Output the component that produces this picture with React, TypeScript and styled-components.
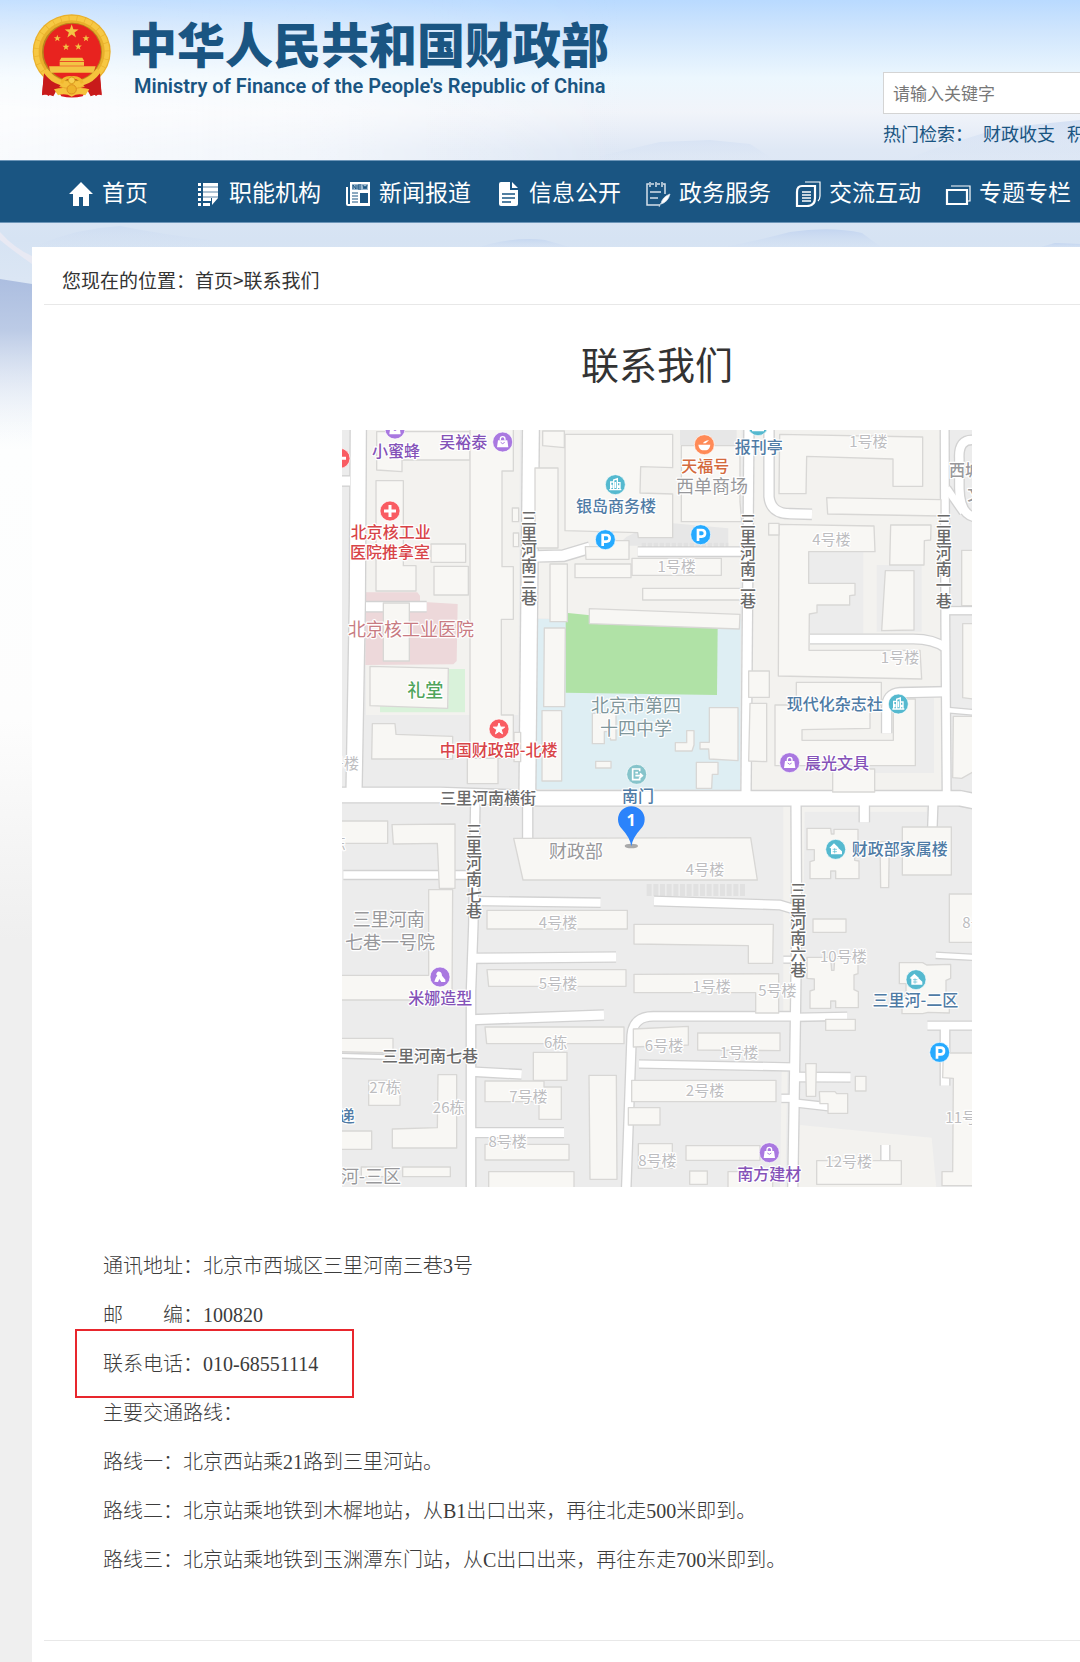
import React from "react";
import styled, { createGlobalStyle } from "styled-components";

const sans = `"Noto Sans CJK SC", "Noto Sans", sans-serif`;
const brandBlue = "#1a5582";

const GlobalStyle = createGlobalStyle`
  *, *::before, *::after { box-sizing: border-box; }
  body { margin: 0; background: #efefef; font-family: ${sans}; color: #333; }
  a { color: inherit; text-decoration: none; }
`;

const Page = styled.div`
  position: relative;
  display: flex;
  flex-direction: column;
  min-height: 100vh;
  overflow: hidden;
  background: linear-gradient(
    #b9daff 0, #cfe5fd 30px, #ecf7fe 78px, #f1f4fa 112px, #dfe8f5 150px,
    #d6e3f3 240px, #dbe6f4 280px, #fdfefe 450px, #fdfdfd 720px, #efefef 940px
  );
`;

const Backdrop = styled.svg`
  position: absolute;
  top: 0;
  left: 0;
  width: 1080px;
  height: 460px;
`;

const Header = styled.header`
  position: relative;
  display: flex;
  justify-content: space-between;
  min-width: 1250px;
  height: 160px;
  margin: 0 32px;
`;

const Brand = styled.a`
  display: flex;
  align-items: flex-start;
  gap: 17px;
  padding-top: 14px;
`;

const Emblem = styled.svg`
  width: 80px;
  height: 84px;
`;

const BrandText = styled.span`
  display: flex;
  flex-direction: column;
  color: ${brandBlue};
`;

const BrandName = styled.span`
  font-size: 48px;
  line-height: 56px;
  font-weight: 900;
`;

const BrandSub = styled.span`
  padding: 4px 0 0 5px;
  font: 600 20px/24px Roboto, "Liberation Sans", Arial, sans-serif;
`;

const Search = styled.form`
  width: 399px;
  padding-top: 72px;
`;

const SearchBox = styled.input`
  display: block;
  width: 100%;
  height: 42px;
  padding: 0 9px 2px;
  border: 1px solid #d4d4d4;
  background: #fff;
  font: 17px/24px ${sans};
  color: #333;
  &::placeholder { color: #777; opacity: 1; }
`;

const HotWords = styled.div`
  display: flex;
  gap: 12px;
  font-size: 18px;
  line-height: 38px;
  color: ${brandBlue};
  white-space: nowrap;
`;

const HotLabel = styled.span`
  width: 88px;
`;

const Nav = styled.nav`
  position: relative;
  min-width: 1314px;
  height: 63px;
  padding: 0 68px;
  border: solid #6c95b8;
  border-width: 1px 0;
  background: ${brandBlue};
`;

const NavList = styled.ul`
  display: grid;
  grid-template-columns: 127px repeat(6, 150px);
  margin: 0;
  padding: 0;
  list-style: none;
`;

const NavLink = styled.a`
  display: flex;
  align-items: center;
  gap: 8px;
  height: 61px;
  font-size: 23px;
  line-height: 60px;
  color: #fff;
  white-space: nowrap;
  svg { width: 26px; height: 26px; margin-top: 4px; }
  span { margin-top: -2px; }
`;

const Panel = styled.main`
  position: relative;
  flex: 1;
  min-width: 1250px;
  margin: 24px 32px 0;
  padding: 0 12px 20px;
  background: #fff;
`;

const Crumbs = styled.nav`
  padding: 9px 18px 0;
  border-bottom: 1px solid #e8e8e8;
  font-size: 19px;
  line-height: 48px;
`;

const Title = styled.h1`
  margin: 30px 0 39px;
  font-size: 38px;
  line-height: 56px;
  font-weight: 400;
  text-align: center;
`;

const MapFigure = styled.figure`
  width: 630px;
  margin: 0 auto 55px;
  svg { display: block; width: 100%; height: auto; }
`;

const Details = styled.div`
  padding: 0 59px 55px;
  border-bottom: 1px solid #e8e8e8;
  font-family: "Liberation Serif", "Noto Sans CJK SC", serif;
  font-size: 20px;
  line-height: 49px;
  font-weight: 300;
  color: #3c3c3c;
`;

const Line = styled.p`
  position: relative;
  margin: 0;
  white-space: pre;
`;

const Highlight = styled.span`
  position: absolute;
  top: -11px;
  left: -28px;
  width: 279px;
  height: 69px;
  border: 2px solid #e8262d;
`;

/* ---------- navigation icons ---------- */

const icons: Record<string, React.ReactNode> = {
  home: <path fill="#fff" d="M13 1 25 13H21V25H15V16H11V25H5V13H1Z" />,
  org: (
    <g fill="#fff">
      {[2, 7, 12, 17].map((y) => (
        <g key={y}>
          <rect x="3" y={y} width="3" height="3" />
          <rect x="8" y={y} width={y === 17 ? 8 : 15} height="3" />
        </g>
      ))}
      <path opacity=".65" d="M8 5H23V7H8ZM8 10H23V12H8ZM8 15H23V17H8Z" />
      <path d="M3 22H6V25H3ZM8 22H15V25H8ZM17 17H23L17 24Z" />
    </g>
  ),
  news: (
    <g>
      <path fill="#fff" d="M5 1H25V25H3Q1 25 1 23V6H3V23H5Z" />
      <rect x="7" y="3" width="16" height="6" fill="#9db9cf" />
      <path stroke={brandBlue} strokeWidth="1" fill="none" d="M8 8V4L11 8V4M16 4H13V8H16M13 6H16M18 4 19 8 20 5 21 8 22 4M7 12H13M7 15H13M7 18H13M7 21H13" />
      <rect x="15" y="12" width="8" height="10" fill={brandBlue} />
    </g>
  ),
  info: (
    <g>
      <path fill="#fff" d="M6 1H15V9H23V23Q23 25 21 25H6Q4 25 4 23V3Q4 1 6 1ZM17 1 23 7H17Z" />
      <path stroke={brandBlue} strokeWidth="1.4" d="M7 13H20M7 17H20M7 21H16" />
    </g>
  ),
  service: (
    <g fill="none" stroke="#d5e0ea" strokeWidth="1.5">
      <path d="M4 3H2V24H15M18 3H20V13M6 3H9M12 3H15M5 1V6M11 1V6M17 1V6M5 11H16M5 17H13" />
      <path fill="#fff" strokeWidth=".8" d="M25 13Q17 16 16 23Q23 21 25 13ZM16 22 14 26" />
    </g>
  ),
  exchange: (
    <g fill="none" stroke="#fff">
      <path strokeWidth="2.2" d="M7 5H20V17Q20 25 12 25H2V11Q2 5 7 5Z" />
      <path strokeWidth="1.2" d="M10 1H25V15Q25 18 23 20" />
      <path strokeWidth="1.6" d="M7 11H16M7 14H16M7 17H16M7 20H16" />
    </g>
  ),
  topic: (
    <g fill="none" stroke="#fff">
      <path strokeWidth="2.2" d="M2 9H22V23H2Z" />
      <path strokeWidth="1.2" d="M6 5H25V20H23" />
    </g>
  ),
};

const navItems = [
  ["home", "首页"],
  ["org", "职能机构"],
  ["news", "新闻报道"],
  ["info", "信息公开"],
  ["service", "政务服务"],
  ["exchange", "交流互动"],
  ["topic", "专题专栏"],
];

/* ---------- emblem ---------- */

const star = (cx: number, cy: number, r: number) =>
  Array.from({ length: 10 }, (_, i) => {
    const a = (Math.PI * i) / 5 - Math.PI / 2;
    const d = i % 2 ? r * 0.4 : r;
    return `${(cx + d * Math.cos(a)).toFixed(1)},${(cy + d * Math.sin(a)).toFixed(1)}`;
  }).join(" ");

const NationalEmblem = () => (
  <Emblem viewBox="36 26 240 252" aria-hidden="true">
    <path fill="#d8161c" d="M72 203 66 268Q78 264 86 272L110 250 124 273Q155 280 188 273L203 250 228 272Q236 264 245 268L238 203Z" />
    <ellipse cx="155" cy="139" rx="117" ry="112" fill="#e9b02c" />
    <ellipse cx="155" cy="139" rx="106" ry="101" fill="none" stroke="#f7c843" strokeWidth="14" strokeDasharray="22 2" />
    <ellipse cx="156" cy="140" rx="90" ry="88" fill="#b9821c" />
    <ellipse cx="157" cy="140" rx="86" ry="85" fill="#e8231f" />
    <g fill="#f3c444">
      <polygon points={star(155, 79, 22)} />
      <polygon points={star(112, 99, 11)} />
      <polygon points={star(198, 99, 11)} />
      <polygon points={star(138, 125, 11)} />
      <polygon points={star(175, 124, 11)} />
      <path d="M124 157H187L193 168H118ZM119 170H192V181H119ZM87 183H227L220 202H92Z" />
    </g>
    <path fill="none" stroke="#f5c23c" strokeWidth="16" d="M75 195Q108 238 155 238Q204 238 237 195" />
    <path fill="#c81b1b" d="M72 204Q92 232 122 240L112 250 100 273Q82 264 66 270ZM240 204Q220 232 190 240L200 250 212 273Q230 264 245 270Z" />
    <path fill="none" stroke="#f0b72e" strokeWidth="9" d="M125 234Q130 214 155 217Q180 214 187 234" />
    <path fill="#f5c23c" d="M102 252Q130 244 155 252Q182 244 208 252L196 270Q174 262 155 274Q136 262 114 270Z" />
    <circle cx="155" cy="252" r="14" fill="#eeb32b" stroke="#dd8f20" strokeWidth="3" />
    <circle cx="155" cy="225" r="10" fill="#f8d152" stroke="#dd9f20" strokeWidth="3" />
  </Emblem>
);

/* ---------- map ---------- */

const font = { fontFamily: sans };

const land: [string, string][] = [
  ["#f3f2ef", "78,0 540,0 535,870 378,870 78,870"],
  ["#f3f2ef", "598,0 1205,0 1200,590 590,580"],
  ["#f3f2ef", "1240,0 1800,0 1805,1095 1230,1095"],
  ["#f3f2ef", "1380,2100 1775,2138 1790,2300 1366,2300"],
  ["#f3f2ef", "1330,1140 1352,1140 1360,1760 1330,1760"],
  ["#f3f2ef", "1384,1146 1760,1146 1760,1160 1394,1160 1390,1500 1384,1500"],
  ["#f3f2ef", "1325,1940 1342,1940 1336,2300 1320,2300"],
  ["#ececec", "1405,380 1570,380 1570,625 1405,625"],
  ["#ececec", "1610,420 1745,420 1745,620 1610,620"],
  ["#ececec", "1690,820 1782,820 1782,1044 1560,1044 1560,1020 1690,1020"],
  ["#e7e7e7", "1020,14 1190,14 1190,60 1020,60"],
  ["#e7e7e7", "950,290 1165,310 1165,362 830,362 860,335"],
  ["#deeef3", "590,582 1202,582 1200,1095 588,1092"],
  ["#b0e2a6", "677,563 1133,610 1131,810 677,803"],
  ["#edd8da", "78,502 232,502 240,512 240,530 353,537 350,708 340,718 76,720"],
  ["#d9f2da", "325,732 375,732 375,862 120,862 120,840 325,840"],
];

const roads: [number, string][] = [
  [44, "M55 0 52 530 42 1100"],
  [26, "M0 168H30"],
  [46, "M573 0 562 1110"],
  [42, "M-10 1110H300L600 1120H1860L1910 1130"],
  [26, "M563 1130V1245"],
  [26, "M1227 0 1218 1110"],
  [22, "M1814 0 1816 600 1820 1110"],
  [24, "M406 1130 400 1500 393 1700V2310"],
  [23, "M400 1428 782 1433"],
  [26, "M396 1600 828 1596"],
  [26, "M396 1784 792 1770"],
  [24, "M396 1940 545 1948"],
  [25, "M396 2123H672"],
  [22, "M10 1350H390"],
  [10, "M0 1892 140 1896"],
  [26, "M1368 1130 1370 1500 1366 1800 1358 2310"],
  [24, "M858 2310 875 1830Q880 1774 940 1774H1365"],
  [20, "M897 1917 1365 1926"],
  [24, "M942 1428 1320 1440 1360 1452"],
  [20, "M1368 1777 1522 1774"],
  [24, "M1366 1956 1532 1957"],
  [20, "M1366 2034 1465 2045"],
  [26, "M1573 1130V1192"],
  [24, "M1780 1130 1777 1210"],
  [22, "M1762 1802H1900"],
  [24, "M1815 1802V1982"],
  [14, "M1787 1591 1900 1597"],
  [26, "M1287 0V215Q1292 266 1350 266L1416 268"],
  [30, "M590 394 670 392 750 368"],
  [24, "M893 380H1205"],
  [24, "M1410 642H1720Q1780 642 1816 668"],
  [26, "M1820 800 1680 803Q1640 806 1640 850V925"],
  [20, "M1820 557H1900"],
  [24, "M1900 45Q1855 42 1858 100V190Q1860 265 1900 275"],
  [20, "M1820 190 1870 262"],
  [12, "M1820 855 1900 862"],
  [26, "M78 545H260"],
  [16, "M1330 1604H1360"],
  [20, "M1324 2020H1360"],
  [22, "M1636 2160V2210"],
];

const buildings = [
  "110,20 390,20 390,105 186,105 186,140 110,135",
  "108,167 190,167 190,422 228,422 228,498 108,498",
  "273,357 377,357 377,412 273,412",
  "282,424 385,424 385,510 282,510",
  "390,0 520,0 520,138 486,138 486,425 520,425 520,583 484,583 484,870 520,870 520,1000 390,1000",
  "130,534 208,534 208,708 130,708",
  "90,724 325,730 323,850 90,842",
  "97,896 165,896 168,928 338,934 338,1002 95,1002",
  "382,1000 474,1000 474,1076 382,1076",
  "517,249 536,249 536,290 517,290",
  "520,324 536,324 536,365 520,365",
  "522,922 542,922 542,1010 522,1010",
  "608,18 673,18 673,68 608,62",
  "585,129 654,129 654,369 585,369",
  "675,28 998,28 998,128 902,125 900,204 998,207 998,338 895,338 893,323 675,317",
  "736,365 800,365 800,347 867,347 867,403 738,403",
  "705,417 873,417 873,458 705,458",
  "876,400 1144,400 1144,451 876,451",
  "908,490 1205,490 1205,525 908,525",
  "630,417 682,417 682,590 630,590",
  "748,551 1200,568 1198,612 748,596",
  "613,609 676,609 674,845 611,845",
  "606,857 665,857 665,1068 606,1068",
  "757,865 828,865 828,945 812,945 808,920 793,920 793,956 757,956",
  "767,1009 813,1009 813,1029 767,1029",
  "1108,848 1194,848 1194,1007 1108,1002 1106,972 1080,972 1080,952 1108,952",
  "1040,917 1062,917 1062,960 1056,978 1006,978 1006,953 1040,953",
  "1069,1012 1134,1012 1134,1048 1117,1048 1115,1090 1069,1090",
  "1024,62 1200,62 1200,230 1205,290 1024,290",
  "1319,28 1748,36 1748,184 1659,184 1659,102 1400,94 1398,206 1317,206",
  "1460,218 1803,224 1803,273 1463,267",
  "1317,298 1602,303 1605,380 1406,380 1406,475 1545,475 1545,510 1529,512 1529,540 1431,540 1431,563 1408,567 1407,676 1740,676 1745,762 1315,753",
  "1286,295 1317,295 1317,330 1286,330",
  "1652,300 1773,300 1772,345 1753,347 1752,420 1649,420",
  "1636,437 1722,437 1722,615 1625,617",
  "1226,738 1288,738 1288,817 1226,817",
  "1230,835 1280,835 1280,1010 1226,1008",
  "1369,772 1624,772 1624,840 1590,840 1590,910 1386,914 1386,946 1660,946 1660,822 1726,822 1726,1022 1305,1022 1305,840 1369,840",
  "1478,1032 1604,1032 1604,1101 1478,1101",
  "1865,376 1900,376 1900,542 1865,542",
  "1868,596 1900,596 1900,822 1868,818",
  "1840,874 1900,874 1900,1040 1865,1060 1838,1058",
  "0,1188 143,1188 143,1255 0,1255",
  "156,1199 345,1197 345,1390 298,1390 292,1255 160,1257",
  "266,1394 338,1394 336,1725 0,1725 0,1651 266,1651",
  "521,1240 1232,1238 1252,1365 549,1365",
  "441,1456 862,1456 862,1512 441,1512",
  "441,1634 858,1634 858,1684 446,1684",
  "435,1806 852,1806 852,1856 440,1856",
  "580,1882 681,1882 681,1966 580,1966",
  "435,1968 612,1968 612,1986 664,1986 664,2083 597,2083 597,2030 435,2030",
  "747,1951 829,1951 831,2263 750,2263",
  "435,2158 687,2158 687,2205 435,2205",
  "446,2240 702,2240 702,2310 446,2310",
  "0,1840 159,1840 159,1884 0,1880",
  "86,1966 180,1966 180,2041 86,2041",
  "294,1949 350,1949 350,2169 157,2169 157,2112 292,2108",
  "0,2118 95,2118 95,2173 0,2173",
  "64,2226 150,2226 150,2255 64,2255",
  "188,2226 331,2226 331,2255 188,2255",
  "882,1498 1300,1498 1298,1615 1225,1615 1225,1562 882,1557",
  "882,1648 1316,1646 1316,1764 1247,1764 1247,1703 882,1703",
  "880,1812 1045,1804 1045,1860 880,1866",
  "1073,1824 1320,1824 1320,1877 1073,1875",
  "875,1966 1308,1966 1308,2030 875,2030",
  "865,2048 960,2048 960,2100 865,2100",
  "895,2156 997,2156 997,2230 895,2230",
  "1038,2162 1260,2162 1260,2206 1038,2206",
  "1049,2238 1102,2238 1102,2278 1049,2278",
  "1164,2240 1298,2240 1298,2310 1164,2310",
  "1401,1210 1472,1210 1474,1227 1482,1227 1482,1213 1554,1213 1554,1274 1544,1276 1544,1306 1557,1308 1557,1361 1487,1361 1487,1338 1472,1338 1472,1361 1410,1361 1410,1310 1423,1306 1423,1274 1401,1274",
  "1401,1597 1472,1597 1475,1636 1482,1636 1484,1600 1554,1600 1554,1646 1542,1650 1542,1694 1555,1700 1555,1748 1487,1748 1487,1728 1472,1728 1472,1750 1410,1750 1410,1698 1423,1694 1423,1662 1401,1660",
  "1678,1613 1748,1613 1760,1620 1832,1618 1832,1660 1818,1666 1818,1710 1828,1712 1828,1764 1764,1762 1748,1766 1686,1766 1686,1714 1698,1712 1698,1676 1678,1676",
  "1620,1250 1648,1250 1646,1388 1622,1388",
  "1687,1206 1834,1206 1834,1350 1687,1350",
  "1828,1407 1900,1407 1900,1552 1828,1552",
  "1419,1482 1518,1482 1518,1522 1419,1522",
  "1457,1783 1546,1783 1546,1816 1457,1816",
  "1397,1916 1429,1916 1427,2014 1399,2014",
  "1546,1954 1578,1954 1578,1998 1546,1998",
  "1438,2000 1485,2000 1490,2006 1523,2006 1523,2065 1464,2065 1464,2036 1440,2036",
  "1810,1884 1900,1884 1900,2282 1806,2282 1806,2240 1838,2240 1840,1960 1808,1958",
  "1430,2207 1684,2207 1684,2278 1430,2278",
];

type Label = [text: string, x: number, y: number, size: number, color: string, vertical?: boolean];

const grey = "#bdbdc0";
const area = "#98989b";
const street = "#6a6a6a";
const poiBlue = "#4f7ba5";
const violet = "#8452b8";
const red = "#d84448";

/* Horizontal labels are anchored at their middle, vertical ones at their top. */
const labels: Label[] = [
  ["1号楼", 1585, 65, 45, grey], ["4号楼", 1474, 361, 45, grey], ["1号楼", 1680, 715, 45, grey],
  ["1号楼", 1010, 441, 45, grey], ["4号楼", 654, 1509, 45, grey], ["5号楼", 654, 1692, 45, grey],
  ["6栋", 647, 1868, 45, grey], ["7号楼", 565, 2030, 45, grey], ["8号楼", 503, 2167, 45, grey],
  ["27栋", 135, 2005, 45, grey], ["26栋", 326, 2065, 45, grey], ["4号楼", 1095, 1350, 45, grey],
  ["1号楼", 1115, 1700, 45, grey], ["5号楼", 1312, 1714, 45, grey], ["6号楼", 972, 1879, 45, grey],
  ["1号楼", 1197, 1899, 45, grey], ["2号楼", 1095, 2014, 45, grey], ["8号楼", 952, 2222, 45, grey],
  ["10号楼", 1510, 1612, 45, grey], ["12号楼", 1526, 2226, 45, grey], ["11号楼", 1886, 2094, 45, grey],
  ["8号楼", 1924, 1509, 45, grey], ["号楼", 12, 1031, 45, grey], ["栋", -6, 1272, 45, grey],
  ["西单商场", 1116, 205, 54, area], ["西城区", 1899, 153, 48, area], ["文", 1906, 224, 48, area],
  ["三里河南", 146, 1502, 54, area], ["七巷一号院", 150, 1571, 54, area], ["财政部", 708, 1298, 54, area],
  ["河-三区", 93, 2275, 54, area],
  ["北京市第四", 888, 862, 54, "#80969b"], ["十四中学", 888, 931, 54, "#80969b"],
  ["三里河南横街", 444, 1137, 48, street], ["三里河南七巷", 270, 1911, 48, street],
  ["三里河南三巷", 567, 254, 48, street, true], ["三里河南二巷", 1224, 263, 48, street, true],
  ["三里河南一巷", 1811, 265, 48, street, true], ["三里河南七巷", 402, 1193, 48, street, true],
  ["三里河南六巷", 1375, 1370, 48, street, true],
  ["北京核工业医院", 213, 632, 54, "#c87b82"], ["礼堂", 256, 816, 54, "#4fa55c"],
  ["北京核工业", 152, 340, 48, red], ["医院推拿室", 150, 399, 48, red], ["中国财政部-北楼", 476, 994, 48, red],
  ["小蜜蜂", 168, 95, 48, violet], ["吴裕泰", 370, 69, 48, violet], ["晨光文具", 1491, 1032, 48, violet],
  ["米娜造型", 301, 1738, 48, violet], ["南方建材", 1288, 2266, 48, violet],
  ["银岛商务楼", 828, 262, 48, poiBlue], ["报刊亭", 1256, 84, 48, poiBlue], ["天福号", 1096, 140, 48, "#d46a3e"],
  ["现代化杂志社", 1484, 855, 48, poiBlue], ["南门", 894, 1130, 48, poiBlue],
  ["财政部家属楼", 1679, 1291, 48, poiBlue], ["三里河-二区", 1726, 1744, 48, poiBlue], ["递", 20, 2090, 48, poiBlue],
];

const glyphs: Record<string, React.ReactNode> = {
  cross: <path stroke="#fff" strokeWidth="9" d="M-18 0H18M0-18V18" />,
  star: <polygon fill="#fff" stroke="#fff" strokeWidth="3" strokeLinejoin="round" points={star(0, 0, 18)} />,
  bag: (
    <g>
      <path fill="#fff" d="M-14-5H14L17 16H-17Z" />
      <path fill="none" stroke="#fff" strokeWidth="4" d="M-7-5V-9Q-7-16 0-16Q7-16 7-9V-5" />
      <path fill="none" stroke="#a978e0" strokeWidth="3" d="M-6 1Q0 9 6 1" />
    </g>
  ),
  tower: (
    <g fill="none" stroke="#fff" strokeWidth="4">
      <path d="M-18 15H18M-14 15V-8H-5M-5 15V-14L6-18V15M6-6H14V15M0-8V10M-10 0V10M10 2V10" />
    </g>
  ),
  house: (
    <g>
      <path fill="#fff" d="M-19-4-5-18 9-5H7L19 6V15H-14V-3Z" />
      <path stroke="#55b9cf" strokeWidth="2" d="M-9 0H4M-9 7H4M-3-4V12" />
    </g>
  ),
  bowl: <path fill="#fff" d="M-18 0H18Q16 14 6 17H-6Q-16 14-18 0ZM-4-4Q0-12 14-13L4-4Z" />,
  parking: <path fill="none" stroke="#fff" strokeWidth="8" d="M-8 19V-14H3Q13-14 13-4Q13 6 3 6H-8" />,
  gate: <path fill="none" stroke="#fff" strokeWidth="5" d="M9-9V-16H-12V16H9V9M-4-5H4M-4 4H16M10-3 17 4 10 10" />,
  salon: <path fill="#fff" d="M-17 14Q-12-2-8-4Q-15-8-7-16Q5-18 6-4L16 8V15H4L-2 6-6 15Z" />,
};

const pois: [string, number, number, string][] = [
  ["bag", 165, 12, "#a978e0"], ["bag", 488, 51, "#a978e0"], ["cross", 0, 100, "#f95c62"],
  ["cross", 150, 258, "#f95c62"], ["star", 477, 912, "#f95c62"], ["tower", 826, 179, "#55b9cf"],
  ["tower", 1254, 2, "#55b9cf"], ["tower", 1675, 837, "#55b9cf"], ["bowl", 1093, 59, "#ff8a57"],
  ["parking", 796, 344, "#26aaff"], ["parking", 1082, 329, "#26aaff"], ["parking", 1799, 1882, "#26aaff"],
  ["gate", 890, 1048, "#86c4cb"], ["bag", 1349, 1013, "#a978e0"], ["salon", 300, 1656, "#a978e0"],
  ["bag", 1288, 2183, "#a978e0"], ["house", 1487, 1273, "#55b9cf"], ["house", 1728, 1664, "#55b9cf"],
];

const LocationMap = () => (
  <svg viewBox="6 15 1890 2271" role="img" aria-label="财政部位置地图">
    <rect x="0" y="0" width="1900" height="2300" fill="#ececec" />
    {land.map(([fill, points]) => <polygon key={points} fill={fill} points={points} />)}
    <path stroke="#e1e1e1" strokeWidth="36" strokeDasharray="15 5" d="M920 1395H1216" />
    <path stroke="#e1e1e1" strokeWidth="14" strokeDasharray="13 5" d="M905 360H1165" />
    <g fill="none" stroke="#d2d2d2" strokeLinejoin="round">
      {roads.map(([w, d]) => <path key={d} d={d} strokeWidth={w + 9} />)}
    </g>
    <g fill="none" stroke="#fff" strokeLinejoin="round">
      {roads.map(([w, d]) => <path key={d} d={d} strokeWidth={w + 1} />)}
    </g>
    <g fill="#f8f7f4" stroke="#d8d7d5" strokeWidth="4" strokeLinejoin="round">
      {buildings.map((points) => <polygon key={points} points={points} />)}
    </g>
    <g style={font} paintOrder="stroke" stroke="#fff" strokeWidth="7" strokeLinejoin="round">
      {labels.map(([text, x, y, size, fill, vertical]) => (
        <text
          key={`${text}${x}`} x={x} y={y} fontSize={size} fill={fill}
          textAnchor={vertical ? "start" : "middle"}
          writingMode={vertical ? "vertical-rl" : undefined}
          fontWeight={size === 48 || text === "礼堂" ? 500 : 400}
        >
          {text}
        </text>
      ))}
    </g>
    {pois.map(([kind, x, y, fill]) => (
      <g key={`${x}-${y}`} transform={`translate(${x} ${y})`}>
        <circle r="30" fill={fill} stroke="#fff" strokeWidth="2" />
        {glyphs[kind]}
      </g>
    ))}
    <ellipse cx="874" cy="1263" rx="20" ry="7" fill="#a9a9a9" />
    <path fill="#2b83fb" d="M874 1264Q870 1238 846 1212A40 40 0 1 1 902 1212Q878 1238 874 1264Z" />
    <text x="873" y="1203" fontSize="48" fontWeight="700" fill="#fff" textAnchor="middle" fontFamily="Open Sans, sans-serif">1</text>
  </svg>
);

export default function App() {
  return (
    <Page>
      <GlobalStyle />
      <Backdrop viewBox="0 0 1080 460" aria-hidden="true">
        <defs>
          <linearGradient id="haze"><stop offset="0" stopColor="#fff" stopOpacity=".8" /><stop offset=".5" stopColor="#fff" stopOpacity=".6" /><stop offset="1" stopColor="#fff" stopOpacity="0" /></linearGradient>
          <linearGradient id="hazeDown" x2="0" y2="1"><stop offset="0" stopColor="#333" /><stop offset=".3" stopColor="#777" /><stop offset=".7" stopColor="#fff" /></linearGradient>
          <mask id="hazeMask"><rect width="620" height="160" fill="url(#hazeDown)" /></mask>
          <linearGradient id="slope" x2="0" y2="1"><stop offset="0" stopColor="#acbee0" /><stop offset=".3" stopColor="#bccbe6" /><stop offset="1" stopColor="#fff" stopOpacity="0" /></linearGradient>
          <linearGradient id="ridge" x2="0" y2="1"><stop offset="0" stopColor="#c3d5f0" /><stop offset="1" stopColor="#d3e0f3" stopOpacity="0" /></linearGradient>
        </defs>
        <rect width="620" height="160" fill="url(#haze)" mask="url(#hazeMask)" />
        <g fill="url(#ridge)">
          <path opacity=".35" d="M600 156 660 142 710 140 750 144 775 160H600Z" />
          <path opacity=".6" d="M930 150 1000 128 1080 120V162H900Z" />
          <path d="M710 250Q760 240 790 232Q830 226 862 233L885 250Z" />
          <path opacity=".8" d="M470 250Q510 236 545 240L580 250Z" />
          <path d="M1030 250 1055 243 1080 244V250Z" />
          <path opacity=".4" d="M40 244Q80 228 120 226Q160 234 210 240V250H40Z" />
        </g>
        <path fill="#e8e9f3" d="M0 232Q14 248 32 256V264Q12 250 0 240Z" />
        <path fill="url(#slope)" d="M0 279 32 284V450H0Z" />
      </Backdrop>

      <Header>
        <Brand href="#">
          <NationalEmblem />
          <BrandText>
            <BrandName>中华人民共和国财政部</BrandName>
            <BrandSub>Ministry of Finance of the People's Republic of China</BrandSub>
          </BrandText>
        </Brand>
        <Search>
          <SearchBox type="text" placeholder="请输入关键字" aria-label="请输入关键字" />
          <HotWords>
            <HotLabel>热门检索：</HotLabel>
            <a href="#">财政收支</a>
            <a href="#">积</a>
          </HotWords>
        </Search>
      </Header>

      <Nav>
        <NavList>
          {navItems.map(([icon, label]) => (
            <li key={label}>
              <NavLink href="#">
                <svg viewBox="0 0 26 26" aria-hidden="true">{icons[icon]}</svg>
                <span>{label}</span>
              </NavLink>
            </li>
          ))}
        </NavList>
      </Nav>

      <Panel>
        <Crumbs>
          您现在的位置：<a href="#">首页</a>&gt;<a href="#">联系我们</a>
        </Crumbs>
        <Title>联系我们</Title>
        <MapFigure><LocationMap /></MapFigure>
        <Details>
          <Line>通讯地址：北京市西城区三里河南三巷3号</Line>
          <Line>邮{"\u3000\u3000"}编：100820</Line>
          <Line>联系电话：010-68551114<Highlight /></Line>
          <Line>主要交通路线：</Line>
          <Line>路线一：北京西站乘21路到三里河站。</Line>
          <Line>路线二：北京站乘地铁到木樨地站，从B1出口出来，再往北走500米即到。</Line>
          <Line>路线三：北京站乘地铁到玉渊潭东门站，从C出口出来，再往东走700米即到。</Line>
        </Details>
      </Panel>
    </Page>
  );
}
